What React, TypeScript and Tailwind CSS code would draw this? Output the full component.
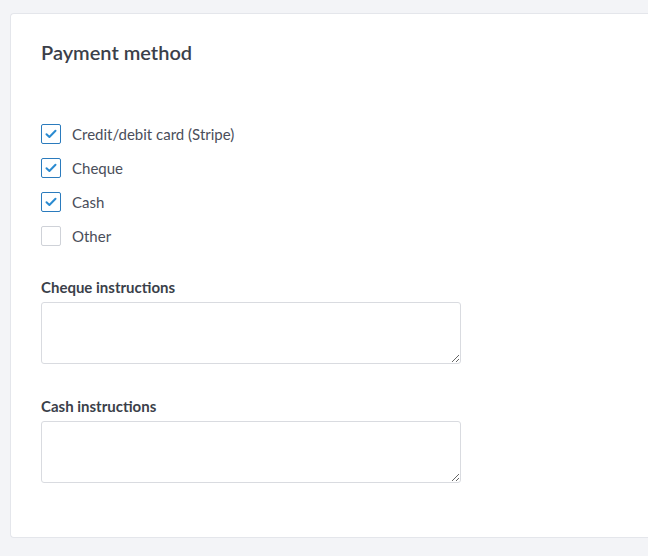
import { useState } from "react";

const methods = [
  { id: "stripe", label: "Credit/debit card (Stripe)", checked: true },
  { id: "cheque", label: "Cheque", checked: true },
  { id: "cash", label: "Cash", checked: true },
  { id: "other", label: "Other", checked: false },
];

function Checkbox({ checked }: { checked: boolean }) {
  return (
    <span
      className={`flex h-5 w-5 shrink-0 items-center justify-center rounded-[2px] border bg-white ${
        checked ? "border-[#2b7bbd]" : "border-[#cfd2d8]"
      }`}
    >
      {checked && (
        <svg width="12" height="10" viewBox="0 0 12 10" fill="none">
          <path d="M1.5 5.2 4.4 8 10.5 1.8" stroke="#2b8bd1" strokeWidth="2" strokeLinecap="round" strokeLinejoin="round" />
        </svg>
      )}
    </span>
  );
}

export default function App() {
  const [state, setState] = useState(methods.map((m) => m.checked));

  return (
    <div className="min-h-[556px] bg-[#f3f4f7] pt-[13px] pl-[10px] pb-[17px] font-['Lato','Open_Sans',sans-serif]">
      <section className="h-[525px] rounded-l-[4px] border border-r-0 border-[#e4e6eb] bg-white pl-[30px] pt-[24px]">
        <h2 className="text-[20px] font-semibold leading-[28px] text-[#3b3f4a]">Payment method</h2>

        <div className="mt-[58px] flex flex-col gap-[14px]">
          {methods.map((m, i) => (
            <label
              key={m.id}
              className="flex h-5 cursor-pointer items-center gap-[11px] text-[15px] text-[#4a4e5a]"
              onClick={() => setState((s) => s.map((v, j) => (j === i ? !v : v)))}
            >
              <Checkbox checked={state[i]} />
              <span>{m.label}</span>
            </label>
          ))}
        </div>

        <div className="mt-[31px] w-[420px]">
          <label htmlFor="cheque" className="block text-[15px] font-bold leading-5 text-[#3b3f4a]">
            Cheque instructions
          </label>
          <textarea
            id="cheque"
            className="mt-[5px] block h-[62px] w-full rounded-[3px] border border-[#d9dbe0] bg-white px-3 py-2 text-[14px] outline-none"
          />
        </div>

        <div className="mt-[32px] w-[420px]">
          <label htmlFor="cash" className="block text-[15px] font-bold leading-5 text-[#3b3f4a]">
            Cash instructions
          </label>
          <textarea
            id="cash"
            className="mt-[5px] block h-[62px] w-full rounded-[3px] border border-[#d9dbe0] bg-white px-3 py-2 text-[14px] outline-none"
          />
        </div>
      </section>
    </div>
  );
}
